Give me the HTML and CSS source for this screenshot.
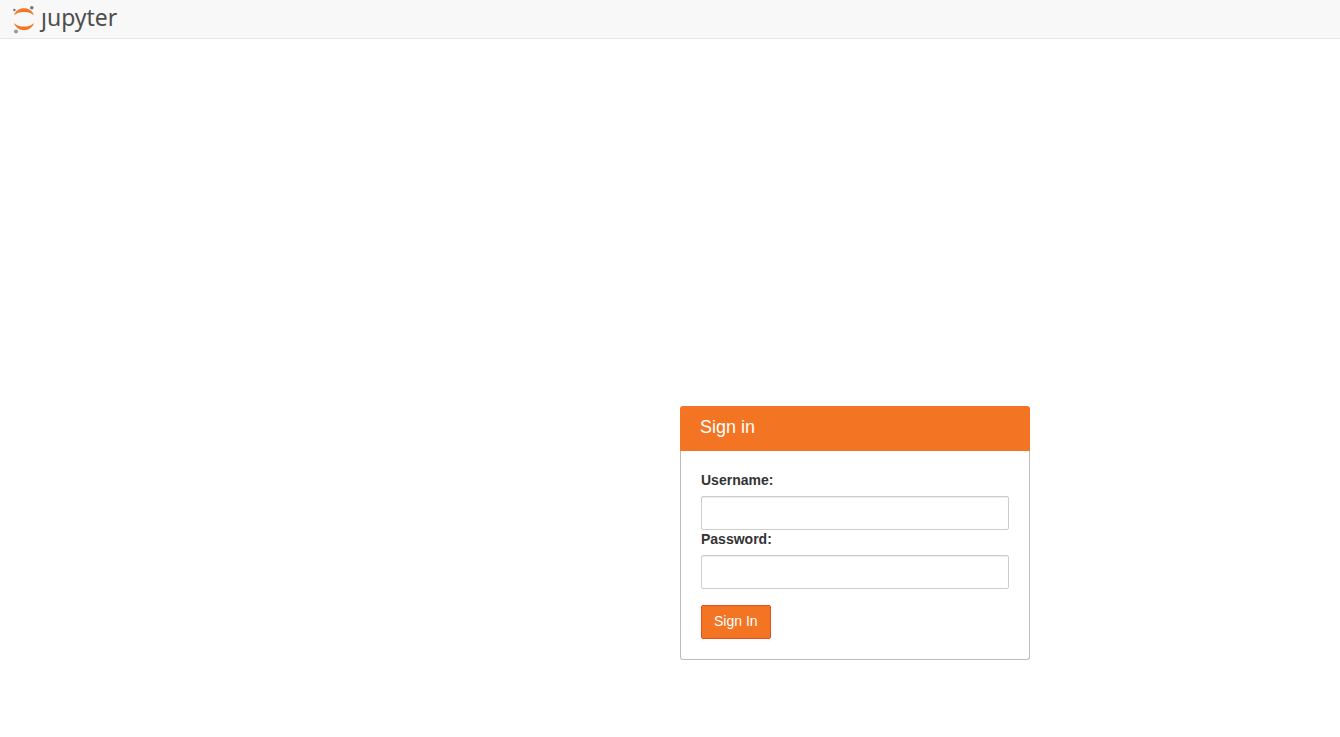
FILE: index.html
```html
<!DOCTYPE html>
<html lang="en">
<head>
<meta charset="utf-8">
<title>Jupyter</title>
<link rel="stylesheet" href="styles.css">
</head>
<body>
<header class="header">
  <a class="logo" href="#" aria-label="jupyter">
    <svg class="logo-mark" viewBox="0 0 24 30" aria-hidden="true">
      <path class="ring" d="M1.900 11.500C3.500 6.800 7.600 4.300 12 4.300S20.500 6.800 22.100 11.500C19.800 9 16 7.900 12 7.900S4.200 9 1.900 11.500Z"/>
      <path class="ring" d="M1.900 19C4.200 21.500 8 22.600 12 22.600S19.800 21.500 22.100 19C20.500 23.700 16.400 26.200 12 26.200S3.500 23.700 1.900 19Z"/>
      <circle class="moon-dark" cx="19.800" cy="3.700" r="1.800"/>
      <circle class="moon-dark" cx="2.400" cy="6" r="1.200"/>
      <circle class="moon-light" cx="4" cy="27.500" r="2.100"/>
    </svg>
    <span class="logo-text">ȷupyter</span>
  </a>
</header>
<main class="page">
  <form class="card">
    <h1 class="card-title">Sign in</h1>
    <div class="card-body">
      <label class="label" for="username">Username:</label>
      <input class="input" id="username" type="text">
      <label class="label" for="password">Password:</label>
      <input class="input" id="password" type="password">
      <button class="submit" type="button">Sign In</button>
    </div>
  </form>
</main>
</body>
</html>
```
FILE: styles.css
```css
* { box-sizing: border-box; }
body {
  margin: 0;
  background: #fff;
  color: #333;
  font: 14px/20px "Liberation Sans", Arial, sans-serif;
}
.header {
  display: flex;
  align-items: center;
  min-height: 39px;
  padding: 0 12px;
  background: #f8f8f8;
  border-bottom: 1px solid #e7e7e7;
}
.logo {
  display: flex;
  align-items: center;
  gap: 5px;
  color: #4e4e4e;
  text-decoration: none;
}
.logo-mark { width: 24px; height: 30px; }
.ring { fill: #f37726; }
.moon-dark { fill: #767677; }
.moon-light { fill: #9e9e9e; }
.logo-text {
  padding-bottom: 4px;
  font: 23px/30px "Noto Sans", "Open Sans", sans-serif;
}
.page {
  display: flex;
  padding: 367px 20px 40px calc(50% + 10px);
}
.card {
  width: 350px;
  max-width: 100%;
}
.card-title {
  margin: 0;
  padding: 10px 20px 13px;
  background: #f37524;
  border-radius: 3px 3px 0 0;
  color: #fff;
  font-size: 18px;
  font-weight: 400;
  line-height: 22px;
}
.card-body {
  display: flex;
  flex-direction: column;
  padding: 20px;
  border: 1px solid #bdbdbd;
  border-top: 0;
  border-radius: 0 0 3px 3px;
}
.label {
  margin-bottom: 7px;
  font-weight: 700;
  line-height: 18px;
}
.input {
  width: 100%;
  height: 34px;
  padding: 6px 12px;
  border: 1px solid #ccc;
  border-radius: 2px;
  background: #fff;
  box-shadow: inset 0 1px 1px rgba(0, 0, 0, .075);
  font: inherit;
}
.submit {
  align-self: flex-start;
  margin-top: 16px;
  padding: 5px 12px 7px;
  border: 1px solid #e34f21;
  border-radius: 2px;
  background: #f37524;
  color: #fff;
  font: inherit;
}
```
